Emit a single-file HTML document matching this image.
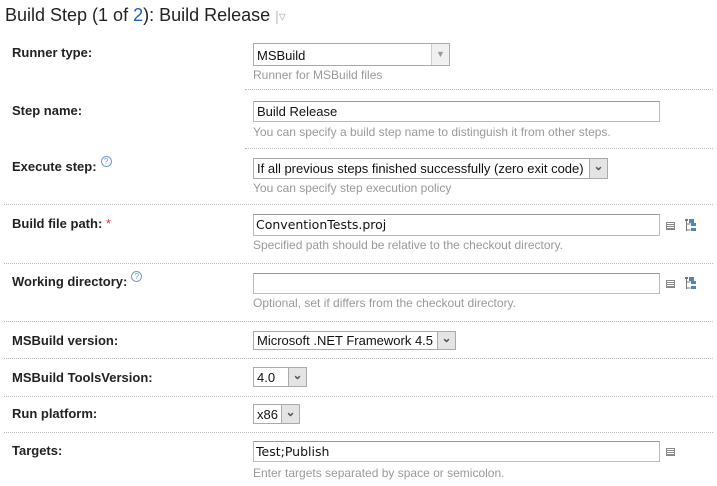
<!DOCTYPE html>
<html><head><meta charset="utf-8"><style>
body{margin:0;width:717px;height:486px;background:#fff;font-family:"Liberation Sans",Arial,sans-serif;position:relative;overflow:hidden}
.a{position:absolute;white-space:nowrap}
.t{left:5px;top:5px;font-size:18px;color:#222}
.t b{font-weight:normal;color:#1e64b4}
.l{left:12px;font-size:13px;font-weight:bold;color:#222}
.h{left:253px;font-size:12px;color:#999}
.sep{position:absolute;right:4px;border-top:1px dotted #bbb;height:0}
.in{position:absolute;left:253px;border:1px solid #bbb;border-top-color:#999;box-sizing:border-box;font-size:13px;color:#111;padding:2px 0 0 3px;background:#fff}
.mono{font-family:"DejaVu Sans",sans-serif;font-size:12.5px;padding-left:2px}
.sel{position:absolute;left:253px;border:1px solid #aaa;box-sizing:border-box;font-size:13px;color:#111;padding:2px 0 0 3px;background:#fff}
.sel i{position:absolute;right:0;top:0;bottom:0;width:17px;background:#e4e4e4;border-left:1px solid #aaa;font-style:normal;font-size:12px;font-weight:bold;color:#555;text-align:center;line-height:14px}
.q{display:inline-block;width:9px;height:9px;border:1px solid #6c9bd0;border-radius:50%;font-size:8px;line-height:9px;text-align:center;color:#6c9bd0;font-weight:normal;vertical-align:top;margin-left:4px;margin-top:-3px}
.ic{position:absolute;left:666px;width:9px;height:8px;border:1px solid #888;box-sizing:border-box;background:repeating-linear-gradient(#fff 0 1px,#888 1px 2px)}
</style></head><body>
<div class="a t">Build Step (1 of <b>2</b>): Build Release <span style="color:#bbb;font-size:14px">|▿</span></div>

<div class="a l" style="top:45px">Runner type:</div>
<div class="sel" style="top:43px;width:197px;height:23px;padding-top:4px">MSBuild<i style="background:#f0f0f0;border-left-color:#ccc;color:#999;font-size:9px;font-weight:normal;line-height:20px">▼</i></div>
<div class="a h" style="top:68px">Runner for MSBuild files</div>
<div class="sep" style="left:245px;top:89px"></div>

<div class="a l" style="top:103px">Step name:</div>
<div class="in" style="top:101px;width:407px;height:21px">Build Release</div>
<div class="a h" style="top:125px">You can specify a build step name to distinguish it from other steps.</div>
<div class="sep" style="left:245px;top:148px"></div>

<div class="a l" style="top:159px">Execute step:<span class="q">?</span></div>
<div class="sel" style="top:158px;width:355px;height:21px">If all previous steps finished successfully (zero exit code)<i>⌄</i></div>
<div class="a h" style="top:181px">You can specify step execution policy</div>
<div class="sep" style="left:4px;top:204px"></div>

<div class="a l" style="top:216px">Build file path: <span style="color:#e33;font-weight:normal">*</span></div>
<div class="in mono" style="top:214px;width:407px;height:22px">ConventionTests.proj</div>
<div class="ic" style="top:222px"></div>
<svg class="a" style="left:685px;top:219px" width="12" height="13"><path d="M1.5 1v11M1.5 5h4M1.5 11h4" stroke="#777" fill="none"/><rect x="0" y="0" width="3" height="2" fill="#777"/><rect x="4" y="0" width="5" height="4" fill="#4a88b8"/><rect x="6" y="4" width="5" height="3" fill="#4a88b8"/><rect x="6" y="9" width="5" height="3" fill="#4a88b8"/></svg>
<div class="a h" style="top:238px">Specified path should be relative to the checkout directory.</div>
<div class="sep" style="left:4px;top:263px"></div>

<div class="a l" style="top:274px">Working directory:<span class="q">?</span></div>
<div class="in" style="top:273px;width:407px;height:21px"></div>
<div class="ic" style="top:280px"></div>
<svg class="a" style="left:685px;top:277px" width="12" height="13"><path d="M1.5 1v11M1.5 5h4M1.5 11h4" stroke="#777" fill="none"/><rect x="0" y="0" width="3" height="2" fill="#777"/><rect x="4" y="0" width="5" height="4" fill="#4a88b8"/><rect x="6" y="4" width="5" height="3" fill="#4a88b8"/><rect x="6" y="9" width="5" height="3" fill="#4a88b8"/></svg>
<div class="a h" style="top:296px">Optional, set if differs from the checkout directory.</div>
<div class="sep" style="left:4px;top:321px"></div>

<div class="a l" style="top:333px">MSBuild version:</div>
<div class="sel" style="top:331px;width:203px;height:19px;padding-top:1px">Microsoft .NET Framework 4.5<i style="line-height:12px">⌄</i></div>
<div class="sep" style="left:4px;top:358px"></div>

<div class="a l" style="top:370px">MSBuild ToolsVersion:</div>
<div class="sel" style="top:367px;width:54px;height:20px;padding-top:2px">4.0<i>⌄</i></div>
<div class="sep" style="left:4px;top:396px"></div>

<div class="a l" style="top:406px">Run platform:</div>
<div class="sel" style="top:404px;width:47px;height:20px;padding-top:2px">x86<i>⌄</i></div>
<div class="sep" style="left:4px;top:432px"></div>

<div class="a l" style="top:443px">Targets:</div>
<div class="in mono" style="top:441px;width:407px;height:21px">Test;Publish</div>
<div class="ic" style="top:448px"></div>
<div class="a h" style="top:466px">Enter targets separated by space or semicolon.</div>
</body></html>
